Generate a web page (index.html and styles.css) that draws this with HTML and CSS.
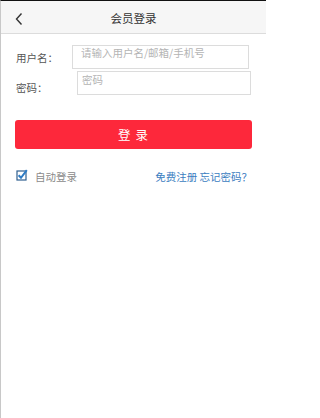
FILE: index.html
```html
<!DOCTYPE html>
<html lang="zh-CN">
<head>
<meta charset="utf-8">
<title>会员登录</title>
<link rel="stylesheet" href="styles.css">
</head>
<body>
<div class="page">
  <header class="topbar">
    <a class="back" href="#" aria-label="返回">
      <svg width="10" height="14" viewBox="0 0 10 14"><path d="M7.5 1.5 L2.5 7 L7.5 12.5" fill="none" stroke="#333" stroke-width="1.4"/></svg>
    </a>
    <h1 class="title">会员登录</h1>
  </header>
  <form class="form">
    <div class="row row-user">
      <label class="label label-user">用户名：</label>
      <input class="field field-user" type="text" placeholder="请输入用户名/邮箱/手机号">
    </div>
    <div class="row row-pass">
      <label class="label label-pass">密码：</label>
      <input class="field field-pass" type="password" placeholder="密码">
    </div>
    <button class="submit" type="button">登 录</button>
    <div class="extras">
      <label class="auto">
        <svg class="check" width="12" height="12" viewBox="0 0 12 12">
          <rect x="1" y="2" width="9" height="9" fill="#fff" stroke="#2f5f8f" stroke-width="1.2"/>
          <path d="M2.6 6.2 L5 8.8 L10.8 1.2" fill="none" stroke="#2d7bc4" stroke-width="2"/>
        </svg>
        <span>自动登录</span>
      </label>
      <div class="links"><a href="#">免费注册</a> <a href="#">忘记密码？</a></div>
    </div>
  </form>
</div>
</body>
</html>
```
FILE: styles.css
```css
html, body {
  margin: 0;
  padding: 0;
  background: #fff;
}
body {
  font-family: "Noto Sans CJK SC", "Noto Sans", sans-serif;
}
.page {
  box-sizing: border-box;
  width: 266px;
  min-height: 418px;
  border-top: 1px solid #111;
  border-left: 1px solid #c8c8c8;
}
.topbar {
  position: relative;
  height: 32px;
  background: #f6f6f6;
  border-bottom: 1px solid #dcdcdc;
  display: flex;
  align-items: center;
  justify-content: center;
}
.back {
  position: absolute;
  left: 13px;
  top: 11px;
  display: block;
  line-height: 0;
}
.title {
  margin: 0;
  font-size: 11.5px;
  font-weight: normal;
  color: #333;
  line-height: 14px;
  padding-top: 1px;
}
.form {
  padding: 0 14px 0 15px;
}
.row {
  display: flex;
}
.row-user {
  margin-top: 11px;
  align-items: center;
}
.row-pass {
  margin-top: 2px;
  align-items: flex-end;
}
.label {
  font-size: 10.5px;
  line-height: 14px;
  color: #555;
}
.label-user {
  width: 56px;
  padding-top: 1px;
}
.label-pass {
  width: 61px;
}
.field {
  box-sizing: border-box;
  height: 24px;
  margin: 0;
  border: 1px solid #dcdcdc;
  border-radius: 0;
  outline: none;
  background: #fff;
  font-family: inherit;
  font-size: 10.5px;
  line-height: 12px;
  color: #333;
}
.field::placeholder {
  color: #b4b4b4;
}
.field-user {
  width: 177px;
  padding: 0 6px 10px 8px;
}
.field-pass {
  width: 174px;
  padding: 1px 6px 9px 4px;
}
.submit {
  display: block;
  box-sizing: border-box;
  width: 237px;
  height: 29px;
  margin: 25px 0 0 -1px;
  border: none;
  border-radius: 3px;
  background: #fd283b;
  color: #fff;
  font-family: inherit;
  font-size: 12.5px;
  letter-spacing: 1px;
  padding: 0;
}
.extras {
  margin-top: 20px;
  display: flex;
  justify-content: space-between;
  align-items: center;
  height: 14px;
}
.auto {
  display: flex;
  align-items: center;
  font-size: 10.5px;
  color: #8a8a8a;
}
.check {
  margin-right: 7px;
  margin-top: -2px;
}
.links {
  font-size: 10.5px;
}
.links a {
  color: #3b7dbf;
  text-decoration: none;
}
```
